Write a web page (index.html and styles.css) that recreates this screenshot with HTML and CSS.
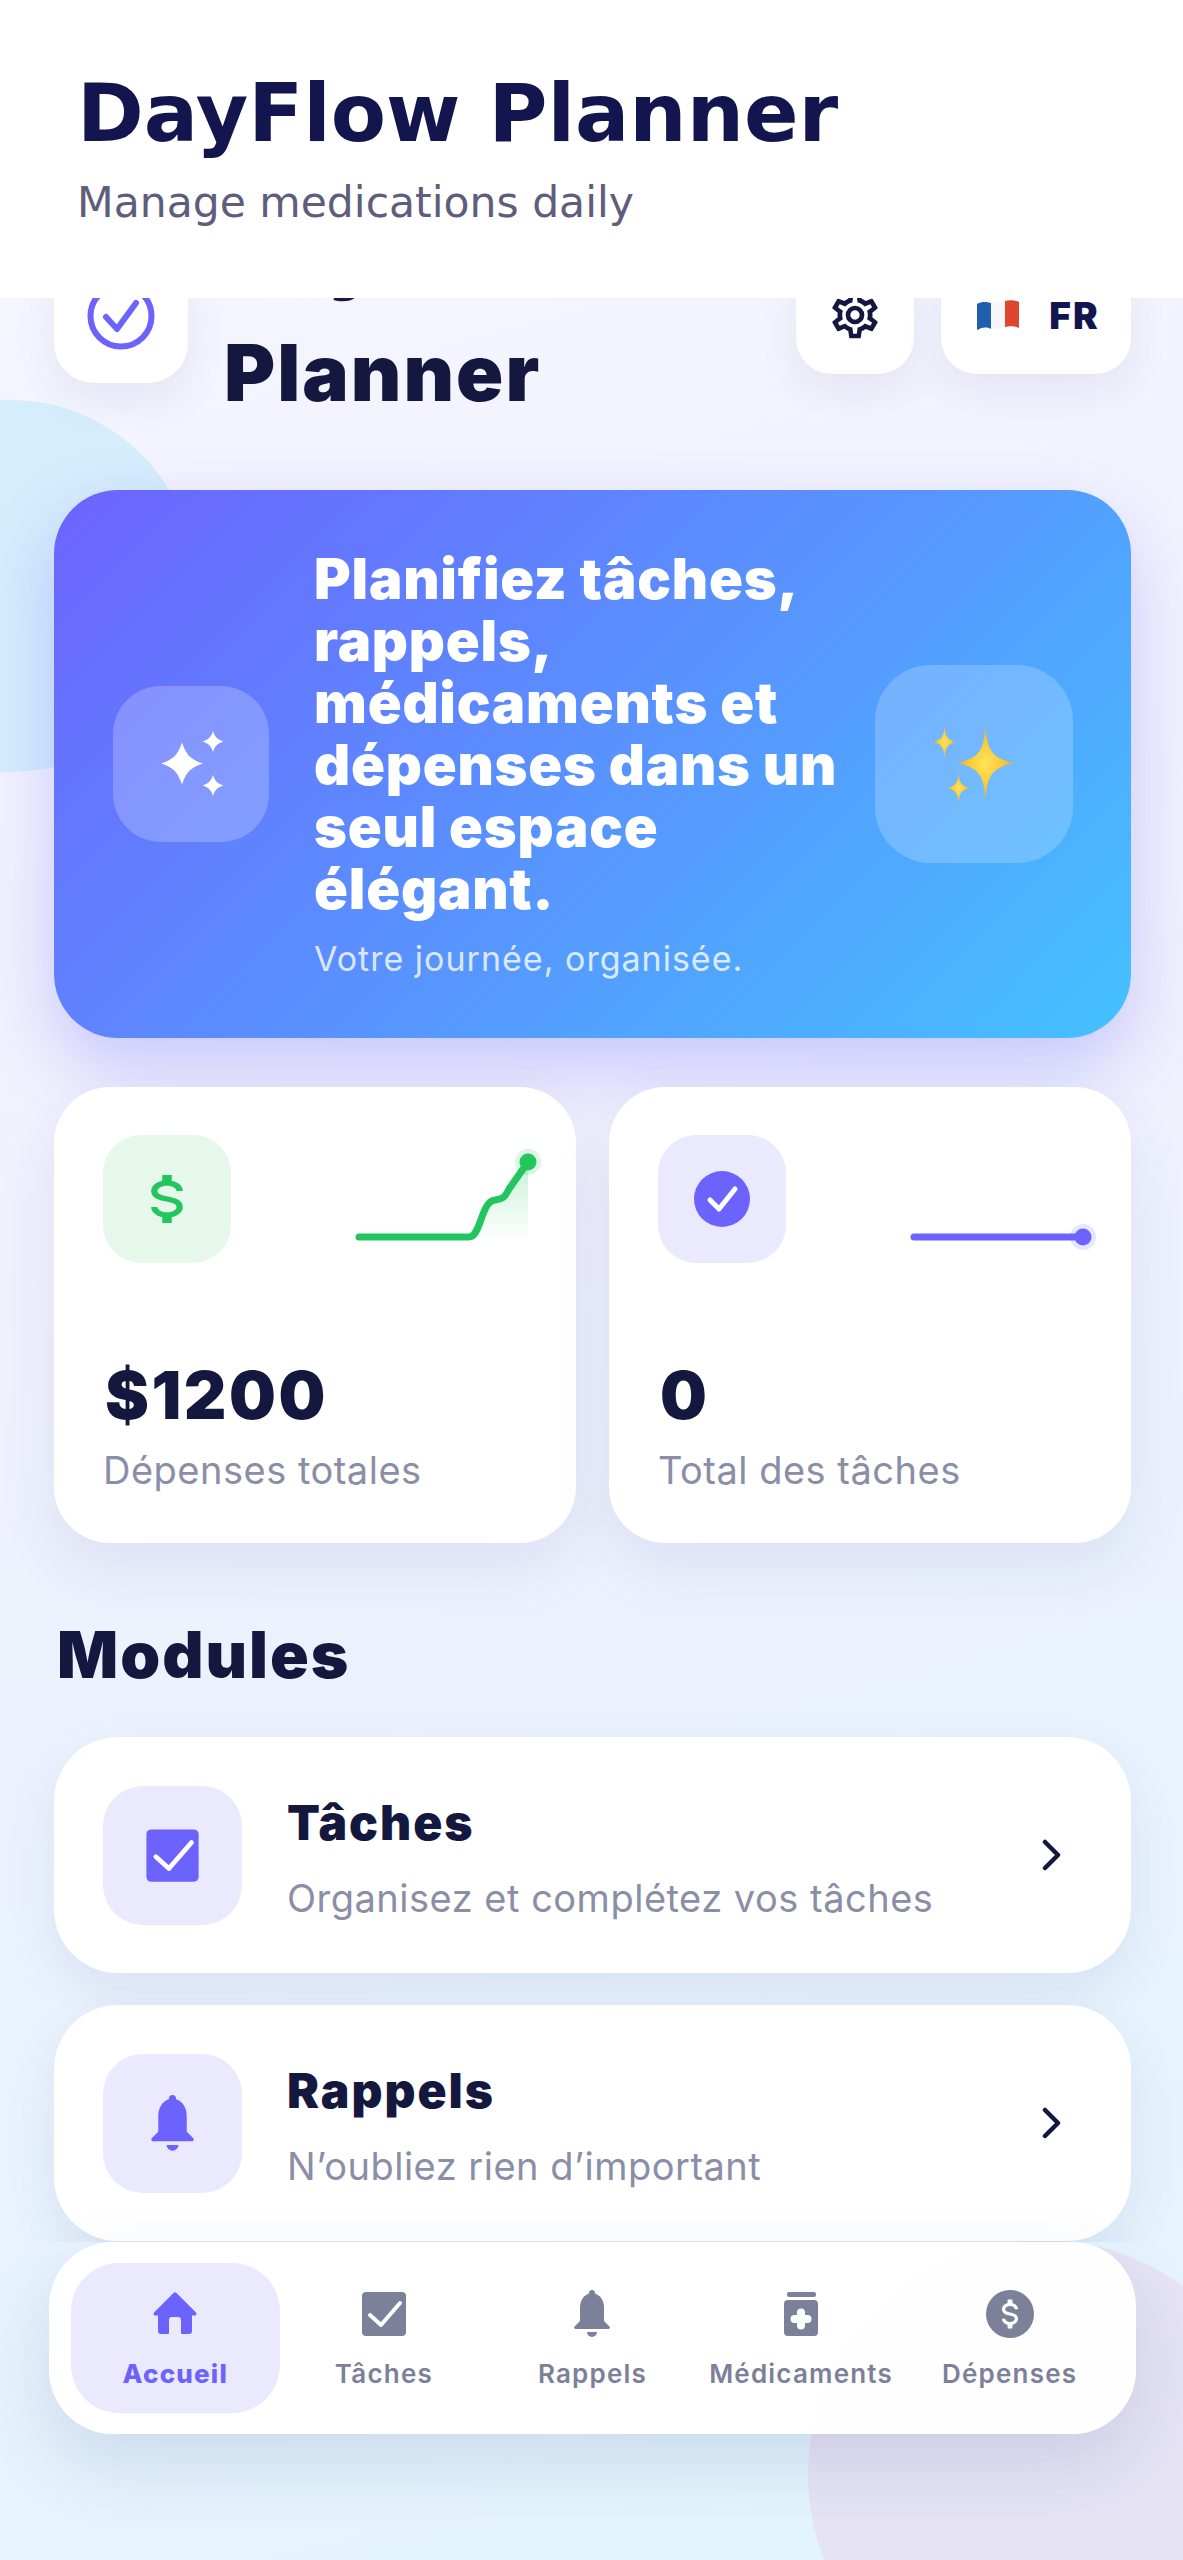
FILE: index.html
```html
<!DOCTYPE html>
<html lang="fr">
<head>
  <meta charset="UTF-8" />
  <meta name="viewport" content="width=device-width, initial-scale=1.0"/>
  <title>DayFlow Planner</title>
  <link rel="stylesheet" href="styles.css">
</head>
<body>
  <!-- shared icons -->
  <svg class="sprite" aria-hidden="true">
    <symbol id="i-home" viewBox="0 0 48 48">
      <path fill="currentColor" d="M22.5 3a2 2 0 0 1 3 0L45 22.5c1 1 .4 3-1 3h-3V41a3 3 0 0 1-3 3h-7a1 1 0 0 1-1-1V30a3 3 0 0 0-3-3h-6a3 3 0 0 0-3 3v13a1 1 0 0 1-1 1h-7a3 3 0 0 1-3-3V25.5H4c-1.4 0-2-2-1-3Z"/>
    </symbol>
    <symbol id="i-check" viewBox="0 0 48 48">
      <rect x="2" y="2" width="44" height="44" rx="4" fill="currentColor"/>
      <path d="M10 25L21 35L40 13" fill="none" stroke="#fff" stroke-width="4" stroke-linecap="round" stroke-linejoin="round"/>
    </symbol>
    <symbol id="i-bell" viewBox="0 0 48 48">
      <path fill="currentColor" d="M24 0a3 3 0 0 1 3 3.5C33 5.5 36 11 36 18V31l5.5 5.500c.8 1 .2 2.500-1.500 2.500H8c-1.700 0-2.300-1.500-1.500-2.500L12 31V18C12 11 15 5.500 21 3.500A3 3 0 0 1 24 0ZM19 42h10a5 5 0 0 1-10 0Z"/>
    </symbol>
    <symbol id="i-jar" viewBox="0 0 48 48">
      <rect x="10" y="2" width="29" height="5" rx="2" fill="currentColor"/>
      <rect x="7" y="10" width="34" height="36" rx="4" fill="currentColor"/>
      <rect x="13.500" y="25" width="21" height="8" rx="4" fill="#fff"/>
      <rect x="20" y="18.500" width="8" height="21" rx="4" fill="#fff"/>
    </symbol>
    <symbol id="i-coin" viewBox="0 0 48 48">
      <circle cx="24" cy="24" r="24" fill="currentColor"/>
      <path fill="#fff" transform="translate(4.800 4.800) scale(1.600)" d="M7,15H9C9,16.08 10.37,17 12,17C13.63,17 15,16.08 15,15C15,13.9 13.96,13.5 11.76,12.97C9.64,12.44 7,11.78 7,9C7,7.21 8.47,5.69 10.5,5.18V3H13.5V5.18C15.53,5.69 17,7.21 17,9H15C15,7.92 13.63,7 12,7C10.37,7 9,7.92 9,9C9,10.1 10.04,10.5 12.24,11.03C14.36,11.56 17,12.22 17,15C17,16.79 15.53,18.31 13.5,18.82V21H10.5V18.82C8.47,18.31 7,16.79 7,15Z"/>
    </symbol>
  </svg>

  <div class="screen">
    <div class="blob blob-blue"></div>
    <div class="blob blob-purple"></div>

    <header class="app-header">
      <h1>DayFlow Planner</h1>
      <p>Manage medications daily</p>
    </header>

    <main class="scroll">
      <div class="top-row">
        <div class="logo-card">
          <svg class="logo-icon" viewBox="0 0 68 68">
            <circle cx="34" cy="34" r="30.500" fill="none" stroke="#6c63ff" stroke-width="6"/>
            <path d="M19 35L30 47L49 21" fill="none" stroke="#6c63ff" stroke-width="6" stroke-linecap="round" stroke-linejoin="round"/>
          </svg>
        </div>
        <div class="brand">DayFlow<br>Planner</div>
        <div class="top-actions">
          <div class="square-btn">
            <svg class="gear" viewBox="0 0 24 24"><path fill="#14183f" d="M12,8A4,4 0 0,1 16,12A4,4 0 0,1 12,16A4,4 0 0,1 8,12A4,4 0 0,1 12,8M12,10A2,2 0 0,0 10,12A2,2 0 0,0 12,14A2,2 0 0,0 14,12A2,2 0 0,0 12,10M10,22C9.75,22 9.54,21.82 9.5,21.58L9.13,18.93C8.5,18.68 7.96,18.34 7.44,17.94L4.95,18.95C4.73,19.03 4.46,18.95 4.34,18.73L2.34,15.27C2.21,15.05 2.27,14.78 2.46,14.63L4.57,12.97L4.5,12L4.57,11L2.46,9.37C2.27,9.22 2.21,8.95 2.34,8.73L4.34,5.27C4.46,5.05 4.73,4.96 4.95,5.05L7.44,6.05C7.96,5.66 8.5,5.32 9.13,5.07L9.5,2.42C9.54,2.18 9.75,2 10,2H14C14.25,2 14.46,2.18 14.5,2.42L14.87,5.07C15.5,5.32 16.04,5.66 16.56,6.05L19.05,5.05C19.27,4.96 19.54,5.05 19.66,5.27L21.66,8.73C21.79,8.95 21.73,9.22 21.54,9.37L19.43,11L19.5,12L19.43,13L21.54,14.63C21.73,14.78 21.79,15.05 21.66,15.27L19.66,18.73C19.54,18.95 19.27,19.04 19.05,18.95L16.56,17.95C16.04,18.34 15.5,18.68 14.87,18.93L14.5,21.58C14.46,21.82 14.25,22 14,22H10M11.25,4L10.88,6.61C9.68,6.86 8.62,7.5 7.85,8.39L5.44,7.35L4.69,8.65L6.8,10.2C6.4,11.37 6.4,12.64 6.8,13.8L4.68,15.36L5.43,16.66L7.86,15.62C8.63,16.5 9.68,17.14 10.87,17.38L11.24,20H12.76L13.13,17.39C14.32,17.14 15.37,16.5 16.14,15.62L18.57,16.66L19.32,15.36L17.2,13.81C17.6,12.64 17.6,11.37 17.2,10.2L19.31,8.65L18.56,7.35L16.15,8.39C15.38,7.5 14.32,6.86 13.12,6.62L12.75,4H11.25Z"/></svg>
          </div>
          <div class="lang-btn">
            <svg class="flag" viewBox="0 0 42 30">
              <path fill="#1f5fae" d="M0 4C5 1 10 2 14 3V29C10 27 5 27 1 30C0 30 0 29 0 28Z"/>
              <path fill="#f6f6f8" d="M14 3C19 4 23 3 28 1V27C23 29 19 30 14 29Z"/>
              <path fill="#e0452f" d="M28 1C32 -.5 38 0 42 2V28C38 26 32 26 28 27Z"/>
            </svg>
            <span>FR</span>
          </div>
        </div>
      </div>

      <section class="hero">
        <div class="hero-badge">
          <svg class="hero-stars" viewBox="0 0 70 70" fill="#fff">
            <path transform="translate(26 34.500) scale(2.100)" d="M0-10C2-4 4-2 10 0C4 2 2 4 0 10C-2 4-4 2-10 0C-4-2-2-4 0-10Z"/>
            <path transform="translate(57 12.500) scale(1.050)" d="M0-10C2-4 4-2 10 0C4 2 2 4 0 10C-2 4-4 2-10 0C-4-2-2-4 0-10Z"/>
            <path transform="translate(57 56.500) scale(1.050)" d="M0-10C2-4 4-2 10 0C4 2 2 4 0 10C-2 4-4 2-10 0C-4-2-2-4 0-10Z"/>
          </svg>
        </div>
        <div class="hero-text">
          <h2>Planifiez tâches, rappels, médicaments et dépenses dans un seul espace élégant.</h2>
          <p>Votre journée, organisée.</p>
        </div>
        <div class="hero-emoji">
          <svg class="emoji-stars" viewBox="0 0 110 110">
            <defs>
              <radialGradient id="gold">
                <stop offset="0" stop-color="#ffe45c"/>
                <stop offset=".6" stop-color="#fcc931"/>
                <stop offset="1" stop-color="#f5a623"/>
              </radialGradient>
            </defs>
            <path fill="url(#gold)" transform="translate(66.500 54) scale(2.800 3.700)" d="M0-10C.6-4 1.500-1.500 10 0C1.500 1.500 .6 4 0 10C-.6 4-1.500 1.500-10 0C-1.500-1.500-.6-4 0-10Z"/>
            <path fill="url(#gold)" transform="translate(25.500 33) scale(1.100 1.700)" d="M0-10C.6-4 1.500-1.500 10 0C1.500 1.500 .6 4 0 10C-.6 4-1.500 1.500-10 0C-1.500-1.500-.6-4 0-10Z"/>
            <path fill="url(#gold)" transform="translate(39.500 79) scale(1.100 1.600)" d="M0-10C.6-4 1.500-1.500 10 0C1.500 1.500 .6 4 0 10C-.6 4-1.500 1.500-10 0C-1.500-1.500-.6-4 0-10Z"/>
          </svg>
        </div>
      </section>

      <section class="stats">
        <div class="stat-card">
          <div class="stat-top">
            <div class="stat-icon green">
              <svg class="dollar" viewBox="0 0 24 24" preserveAspectRatio="none"><path fill="#22c55e" d="M7,15H9C9,16.08 10.37,17 12,17C13.63,17 15,16.08 15,15C15,13.9 13.96,13.5 11.76,12.97C9.64,12.44 7,11.78 7,9C7,7.21 8.47,5.69 10.5,5.18V3H13.5V5.18C15.53,5.69 17,7.21 17,9H15C15,7.92 13.63,7 12,7C10.37,7 9,7.92 9,9C9,10.1 10.04,10.5 12.24,11.03C14.36,11.56 17,12.22 17,15C17,16.79 15.53,18.31 13.5,18.82V21H10.5V18.82C8.47,18.31 7,16.79 7,15Z"/></svg>
            </div>
            <svg class="spark" viewBox="0 0 190 100">
              <defs>
                <linearGradient id="spark-fill" x1="0" y1="0" x2="0" y2="1">
                  <stop offset="0" stop-color="#22c55e" stop-opacity=".24"/>
                  <stop offset="1" stop-color="#22c55e" stop-opacity="0"/>
                </linearGradient>
              </defs>
              <path fill="url(#spark-fill)" d="M118 82C126 82 126 46 140 45C148 44 150 42 154 34L173 7V88H118Z"/>
              <path d="M4 82H114C126 82 126 46 140 45C148 44 150 42 154 34L173 7" fill="none" stroke="#22c55e" stroke-width="7" stroke-linecap="round" stroke-linejoin="round"/>
              <circle cx="173" cy="7" r="13" fill="#22c55e" fill-opacity=".16"/>
              <circle cx="173" cy="7" r="8.500" fill="#22c55e"/>
            </svg>
          </div>
          <div class="stat-value">$1200</div>
          <div class="stat-label">Dépenses totales</div>
        </div>
        <div class="stat-card">
          <div class="stat-top">
            <div class="stat-icon violet">
              <svg class="stat-check" viewBox="0 0 56 56">
                <circle cx="28" cy="28" r="28" fill="#6c63ff"/>
                <path d="M16 29L25 38L41 18" fill="none" stroke="#fff" stroke-width="5" stroke-linecap="round" stroke-linejoin="round"/>
              </svg>
            </div>
            <svg class="spark" viewBox="0 0 190 100">
              <path d="M4 82H173" fill="none" stroke="#6c63ff" stroke-width="7" stroke-linecap="round"/>
              <circle cx="173" cy="82" r="13" fill="#6c63ff" fill-opacity=".16"/>
              <circle cx="173" cy="82" r="8.500" fill="#6c63ff"/>
            </svg>
          </div>
          <div class="stat-value">0</div>
          <div class="stat-label">Total des tâches</div>
        </div>
      </section>

      <h3 class="section-title">Modules</h3>

      <section class="modules">
        <div class="module">
          <div class="module-icon"><svg class="module-svg"><use href="#i-check"/></svg></div>
          <div class="module-text">
            <h4>Tâches</h4>
            <p>Organisez et complétez vos tâches</p>
          </div>
          <svg class="chevron" viewBox="0 0 22 32"><path d="M4 3L17 16L4 29" fill="none" stroke="#14183f" stroke-width="4.500" stroke-linecap="round" stroke-linejoin="round"/></svg>
        </div>
        <div class="module">
          <div class="module-icon"><svg class="module-svg"><use href="#i-bell"/></svg></div>
          <div class="module-text">
            <h4>Rappels</h4>
            <p>N’oubliez rien d’important</p>
          </div>
          <svg class="chevron" viewBox="0 0 22 32"><path d="M4 3L17 16L4 29" fill="none" stroke="#14183f" stroke-width="4.500" stroke-linecap="round" stroke-linejoin="round"/></svg>
        </div>
      </section>
    </main>

    <nav class="tabbar">
      <a class="tab active"><svg class="tab-icon"><use href="#i-home"/></svg><span>Accueil</span></a>
      <a class="tab"><svg class="tab-icon"><use href="#i-check"/></svg><span>Tâches</span></a>
      <a class="tab"><svg class="tab-icon"><use href="#i-bell"/></svg><span>Rappels</span></a>
      <a class="tab"><svg class="tab-icon"><use href="#i-jar"/></svg><span>Médicaments</span></a>
      <a class="tab"><svg class="tab-icon"><use href="#i-coin"/></svg><span>Dépenses</span></a>
    </nav>
  </div>
</body>
</html>
```

FILE: styles.css
```css
* { margin: 0; padding: 0; box-sizing: border-box; }

body {
  font-family: 'Inter', sans-serif;
  color: #14183f;
  overflow: hidden;
}

.sprite {
  display: none;
}

.screen {
  position: relative;
  width: 1183px;
  height: 2560px;
  display: flex;
  flex-direction: column;
  overflow: hidden;
  background: linear-gradient(165deg, #f6f6fe 0%, #f0f1fd 45%, #e2f4fd 100%);
}

.blob {
  position: absolute;
  border-radius: 50%;
}

.blob-blue {
  left: -176px;
  top: 400px;
  width: 372px;
  height: 372px;
  background: #d5edfc;
}

.blob-purple {
  left: 808px;
  top: 2240px;
  width: 470px;
  height: 470px;
  background: #e6e3f5;
}

/* white title bar */
.app-header {
  position: relative;
  z-index: 3;
  height: 298px;
  flex-shrink: 0;
  padding: 68px 77px 0;
  background: #fff;
  font-family: 'DejaVu Sans', sans-serif;
}

.app-header h1 {
  font-size: 80.5px;
  line-height: 90px;
  font-weight: 700;
  color: #13154f;
}

.app-header p {
  margin-top: 20px;
  font-size: 42.5px;
  line-height: 50px;
  color: #5e5d7c;
}

.scroll {
  position: relative;
  z-index: 1;
  flex: 1;
  min-height: 0;
  overflow: hidden;
  padding: 0 52px 0 54px;
}

.top-row {
  display: flex;
  align-items: flex-start;
  margin-top: -49px;
  height: 241px;
}

.logo-card {
  width: 134px;
  height: 134px;
  flex-shrink: 0;
  display: flex;
  align-items: center;
  justify-content: center;
  background: #fff;
  border-radius: 40px;
  box-shadow: 0 18px 40px rgba(60, 60, 140, 0.08);
}

.logo-icon {
  width: 68px;
  height: 68px;
}

.brand {
  margin-left: 36px;
  margin-top: -50px;
  font-size: 78px;
  line-height: 116px;
  font-weight: 900;
  letter-spacing: 2px;
}

.top-actions {
  margin-left: auto;
  margin-top: 7px;
  display: flex;
  gap: 27px;
}

.square-btn,
.lang-btn {
  height: 118px;
  display: flex;
  align-items: center;
  justify-content: center;
  background: #fff;
  border-radius: 36px;
  box-shadow: 0 18px 40px rgba(60, 60, 140, 0.08);
}

.square-btn {
  width: 118px;
}

.gear {
  width: 56px;
  height: 56px;
}

.lang-btn {
  width: 190px;
  gap: 30px;
  padding-left: 5px;
  font-size: 37px;
  font-weight: 900;
  letter-spacing: 2px;
  color: #13154f;
}

.flag {
  width: 42px;
  height: 30px;
}

.hero {
  display: flex;
  align-items: center;
  height: 548px;
  padding: 0 58px 0 59px;
  border-radius: 64px;
  background: linear-gradient(135deg, #6c63ff 0%, #45c1ff 100%);
  box-shadow: 0 30px 70px rgba(108, 99, 255, 0.3);
}

.hero-badge {
  width: 156px;
  height: 156px;
  flex-shrink: 0;
  display: flex;
  align-items: center;
  justify-content: center;
  border-radius: 48px;
  background: rgba(255, 255, 255, 0.22);
}

.hero-stars {
  width: 70px;
  height: 70px;
}

.hero-text {
  flex: 1;
  margin-left: 45px;
  margin-right: 24px;
  color: #fff;
}

.hero-text h2 {
  font-size: 56px;
  line-height: 62px;
  font-weight: 900;
  letter-spacing: 0.8px;
}

.hero-text p {
  margin-top: 17px;
  font-size: 34px;
  line-height: 44px;
  letter-spacing: 1px;
  color: rgba(255, 255, 255, 0.8);
}

.hero-emoji {
  width: 198px;
  height: 198px;
  flex-shrink: 0;
  display: flex;
  align-items: center;
  justify-content: center;
  border-radius: 56px;
  background: rgba(255, 255, 255, 0.2);
}

.emoji-stars {
  width: 110px;
  height: 110px;
}

.stats {
  display: flex;
  gap: 33px;
  margin-top: 49px;
}

.stat-card {
  flex: 1;
  height: 456px;
  padding: 48px 49px 0;
  background: #fff;
  border-radius: 56px;
  box-shadow: 0 24px 60px rgba(60, 60, 140, 0.09);
}

.stat-top {
  display: flex;
  justify-content: space-between;
  height: 128px;
}

.stat-icon {
  width: 128px;
  height: 128px;
  display: flex;
  align-items: center;
  justify-content: center;
  border-radius: 38px;
}

.stat-icon.green { background: #e6f7ec; }
.stat-icon.violet { background: #ebe9fd; }

.dollar {
  width: 76px;
  height: 64px;
}

.stat-check {
  width: 56px;
  height: 56px;
}

.spark {
  width: 190px;
  height: 100px;
  margin-top: 20px;
  margin-right: -18px;
  overflow: visible;
}

.stat-value {
  margin-top: 92px;
  margin-left: 2px;
  font-size: 66px;
  line-height: 80px;
  font-weight: 900;
  letter-spacing: 2.5px;
}

.stat-label {
  margin-top: 12px;
  font-size: 38px;
  line-height: 46px;
  letter-spacing: 0.5px;
  color: #8a8ea6;
}

.section-title {
  margin-top: 74px;
  margin-left: 3px;
  font-size: 64px;
  line-height: 76px;
  font-weight: 900;
  letter-spacing: 2px;
}

.modules {
  display: flex;
  flex-direction: column;
  gap: 32px;
  margin-top: 44px;
}

.module {
  display: flex;
  align-items: center;
  height: 236px;
  padding: 0 68px 0 49px;
  background: #fff;
  border-radius: 64px;
  box-shadow: 0 20px 50px rgba(60, 80, 140, 0.09);
}

.module-icon {
  width: 139px;
  height: 139px;
  flex-shrink: 0;
  display: flex;
  align-items: center;
  justify-content: center;
  border-radius: 40px;
  background: #ebe9fd;
  color: #6c63ff;
}

.module-svg {
  width: 57px;
  height: 57px;
}

.module-text {
  flex: 1;
  margin-left: 45px;
  padding-top: 5px;
}

.module-text h4 {
  font-size: 48px;
  line-height: 56px;
  font-weight: 900;
  letter-spacing: 2px;
}

.module-text p {
  margin-top: 24px;
  font-size: 38px;
  line-height: 46px;
  letter-spacing: 0.5px;
  color: #8a8ea6;
}

.chevron {
  width: 22px;
  height: 32px;
}

/* bottom tabs */
.tabbar {
  position: relative;
  z-index: 2;
  flex-shrink: 0;
  display: flex;
  height: 192px;
  margin: 0 47px 126px 49px;
  padding: 21px 22px;
  background: rgba(255, 255, 255, 0.97);
  border-radius: 64px;
  box-shadow: 0 30px 70px rgba(50, 80, 140, 0.14);
}

.tab {
  flex: 1;
  display: flex;
  flex-direction: column;
  align-items: center;
  padding-top: 27px;
  border-radius: 48px;
  color: #7c8099;
  font-size: 26px;
  font-weight: 600;
  letter-spacing: 1.2px;
  white-space: nowrap;
}

.tab.active {
  background: #ebe9fd;
  color: #6c63ff;
  font-weight: 800;
}

.tab-icon {
  width: 48px;
  height: 48px;
}

.tab span {
  margin-top: 20px;
  line-height: 32px;
}
```
